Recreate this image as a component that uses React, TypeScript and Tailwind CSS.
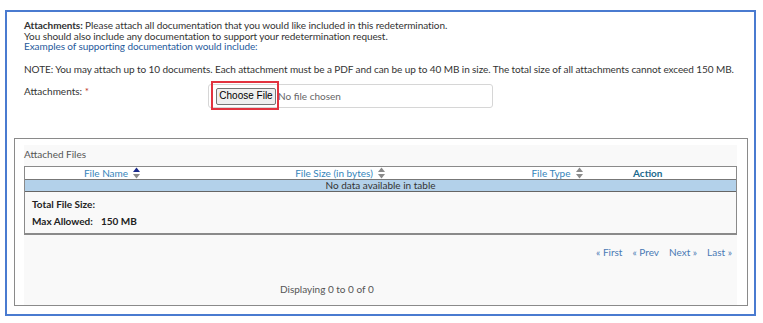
const font = { fontFamily: 'Lato, "Liberation Sans", sans-serif' };

function SortIcon({ active }: { active?: boolean }) {
  return (
    <svg width="7" height="12" viewBox="0 0 7 12" className="ml-[5px] shrink-0">
      <polygon points="3.5,0.5 7,5 0,5" fill={active ? "#1a2a8c" : "#8a8a8a"} />
      <polygon points="0,7 7,7 3.5,11.5" fill="#8a8a8a" />
    </svg>
  );
}

export default function App() {
  return (
    <div className="w-[763px] h-[323px] bg-white pt-[10px] pl-[5px] text-[10px] text-[#333]" style={font}>
      <div className="w-[751px] h-[306px] border-2 border-[#4a7bd0] pt-[8px]">
        <div className="pl-[17px] leading-[10.5px] tracking-[-0.08px]">
          <div className="whitespace-nowrap">
            <span className="font-bold">Attachments:</span> Please attach all documentation that you would like included in this redetermination.
          </div>
          <div className="whitespace-nowrap">You should also include any documentation to support your redetermination request.</div>
          <div className="whitespace-nowrap text-[#1f5a9c]">Examples of supporting documentation would include:</div>
          <div className="mt-[12px] whitespace-nowrap">
            NOTE: You may attach up to 10 documents. Each attachment must be a PDF and can be up to 40 MB in size. The total size of all attachments cannot exceed 150 MB.
          </div>
        </div>

        <div className="flex pl-[17px] mt-[10px] h-[24px]">
          <div className="w-[184px] pt-[1px] leading-[12px]">
            Attachments: <span className="text-[#c0392b]">*</span>
          </div>
          <div className="w-[285px] h-[24px] border border-[#d6d6d6] rounded-[3px] flex items-center pl-[7px]">
            <div className="relative">
              <div className="absolute -left-[5px] -top-[7px] w-[68px] h-[29px] border-2 border-[#e2333f]" />
              <button
                className="w-[60px] h-[17px] bg-[#efefef] border border-[#767676] rounded-[2px] text-[10px] text-black leading-none whitespace-nowrap"
                style={{ fontFamily: '"Liberation Sans", Arial, sans-serif' }}
              >
                Choose File
              </button>
            </div>
            <span className="ml-[2px] text-[#666]">No file chosen</span>
          </div>
        </div>

        <div className="ml-[7px] mt-[30px] w-[734px] h-[168px] border border-[#8a8a8a] pl-[9px] pr-[10px] pt-[6px]">
          <div className="h-full bg-[#f9f9f9]">
            <div className="text-[#555] pt-[4px] h-[21px] leading-[11px]">Attached Files</div>
            <div className="border border-[#8a8a8a] border-b-2 bg-[#f9f9f9]">
              <div className="flex h-[13px] items-center bg-white border-b border-[#777] text-[#3585bb] leading-[11px]">
                <div className="w-[174px] flex justify-center items-center">
                  File Name
                  <SortIcon active />
                </div>
                <div className="w-[282px] flex justify-center items-center">
                  File Size (in bytes)
                  <SortIcon />
                </div>
                <div className="w-[152px] flex justify-center items-center">
                  File Type
                  <SortIcon />
                </div>
                <div className="font-bold text-[#1b6a8e]">Action</div>
              </div>
              <div className="h-[12px] bg-[#b3d1ea] border-b border-[#666] text-center leading-[11px] text-[#333]">
                No data available in table
              </div>
              <div className="pl-[7px] pt-[7px] h-[41px] font-bold text-[#222] leading-[10px]">
                <div>Total File Size:</div>
                <div className="mt-[7px] flex">
                  <span className="w-[69px] shrink-0">Max Allowed:</span>
                  <span>150 MB</span>
                </div>
              </div>
            </div>
            <div className="flex justify-end gap-[10px] pr-[5px] mt-[12px] text-[#4a7ab5] leading-[11px]">
              <span>« First</span>
              <span>« Prev</span>
              <span>Next »</span>
              <span>Last »</span>
            </div>
            <div className="mt-[26px] pl-[256px] text-[#555] leading-[11px]">Displaying 0 to 0 of 0</div>
          </div>
        </div>
      </div>
    </div>
  );
}
